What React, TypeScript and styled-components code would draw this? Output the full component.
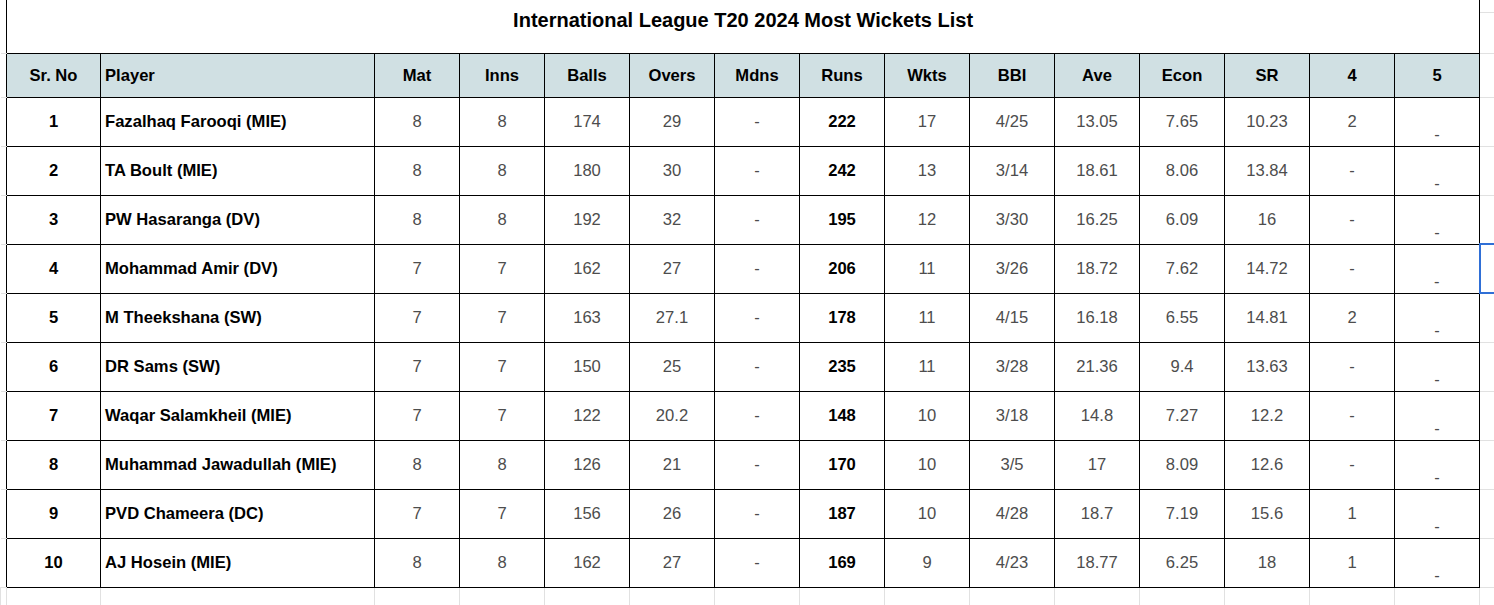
import React from "react";
import styled, { createGlobalStyle } from "styled-components";

type Row = (string | number)[];

const columns = [
  "Sr. No",
  "Player",
  "Mat",
  "Inns",
  "Balls",
  "Overs",
  "Mdns",
  "Runs",
  "Wkts",
  "BBI",
  "Ave",
  "Econ",
  "SR",
  "4",
  "5",
];

const rows: Row[] = [
  [1, "Fazalhaq Farooqi (MIE)", 8, 8, 174, 29, "-", 222, 17, "4/25", 13.05, 7.65, 10.23, 2, "-"],
  [2, "TA Boult (MIE)", 8, 8, 180, 30, "-", 242, 13, "3/14", 18.61, 8.06, 13.84, "-", "-"],
  [3, "PW Hasaranga (DV)", 8, 8, 192, 32, "-", 195, 12, "3/30", 16.25, 6.09, 16, "-", "-"],
  [4, "Mohammad Amir (DV)", 7, 7, 162, 27, "-", 206, 11, "3/26", 18.72, 7.62, 14.72, "-", "-"],
  [5, "M Theekshana (SW)", 7, 7, 163, 27.1, "-", 178, 11, "4/15", 16.18, 6.55, 14.81, 2, "-"],
  [6, "DR Sams (SW)", 7, 7, 150, 25, "-", 235, 11, "3/28", 21.36, 9.4, 13.63, "-", "-"],
  [7, "Waqar Salamkheil (MIE)", 7, 7, 122, 20.2, "-", 148, 10, "3/18", 14.8, 7.27, 12.2, "-", "-"],
  [8, "Muhammad Jawadullah (MIE)", 8, 8, 126, 21, "-", 170, 10, "3/5", 17, 8.09, 12.6, "-", "-"],
  [9, "PVD Chameera (DC)", 7, 7, 156, 26, "-", 187, 10, "4/28", 18.7, 7.19, 15.6, 1, "-"],
  [10, "AJ Hosein (MIE)", 8, 8, 162, 27, "-", 169, 9, "4/23", 18.77, 6.25, 18, 1, "-"],
];

// spreadsheet cell with the blue selection frame (row index)
const selectedRow = 3;

// gutter, Sr. No, Player, 13 stat columns, spill-over column
const widths = [6, 94, 274, ...Array(13).fill(85), 40];
const grid = "#e1e1e1";
const line = "#000";

const App: React.FC = () => {
  return (
    <>
      <GlobalStyle />
      <Sheet>
        <Table>
          <colgroup>
            {widths.map((w, i) => (
              <Col key={i} $width={w} />
            ))}
          </colgroup>
          <tbody>
            <TitleRow $height={12}>
              <Gutter rowSpan={2} />
              <TitleCell colSpan={15} rowSpan={2}>
                International League T20 2024 Most Wickets List
              </TitleCell>
              <Spill />
            </TitleRow>
            <TitleRow $height={41}>
              <Spill />
            </TitleRow>

            <HeadRow>
              <Gutter />
              {columns.map((c, i) => (
                <HeadCell key={c} $left={i === 1}>
                  {c}
                </HeadCell>
              ))}
              <Spill />
            </HeadRow>

            {rows.map((r, ri) => (
              <BodyRow key={ri}>
                <Gutter />
                {r.map((v, ci) => (
                  <Cell
                    key={ci}
                    $bold={ci === 0 || ci === 1 || ci === 7}
                    $left={ci === 1}
                    $low={ci === 14}
                  >
                    {v}
                  </Cell>
                ))}
                <Spill $selected={ri === selectedRow} />
              </BodyRow>
            ))}

            <FillerRow>
              {widths.map((_, i) => (
                <Filler key={i} />
              ))}
            </FillerRow>
          </tbody>
        </Table>
      </Sheet>
    </>
  );
};
export default App;

const GlobalStyle = createGlobalStyle`
  html, body {
    margin: 0;
    padding: 0;
    background: #fff;
    overflow: hidden;
  }
  body {
    font-family: "Liberation Sans", Arial, sans-serif;
  }
`;

const Sheet = styled.div`
  width: 1494px;
  height: 605px;
  overflow: hidden;
  background: #fff;
`;

const Table = styled.table`
  border-collapse: collapse;
  table-layout: fixed;
  width: ${widths.reduce((a, b) => a + b, 0)}px;
  font-size: 16.6px;
  color: #4d4d4d;
`;

const Col = styled.col<{ $width: number }>`
  width: ${(p) => p.$width}px;
`;

const TitleRow = styled.tr<{ $height: number }>`
  height: ${(p) => p.$height}px;
`;

const HeadRow = styled.tr`
  height: 44px;
`;

const BodyRow = styled.tr`
  height: 49px;
`;

const FillerRow = styled.tr`
  height: 30px;
`;

const Gutter = styled.td`
  padding: 0;
  border: none;
  border-bottom: 1px solid ${grid};
`;

const Spill = styled.td<{ $selected?: boolean }>`
  padding: 0;
  border: none;
  border-bottom: 1px solid ${grid};
  ${(p) => p.$selected && `border: 2px solid #2f6fd6;`}
`;

const TitleCell = styled.td`
  padding: 9px 0 0;
  vertical-align: top;
  text-align: center;
  font-size: 20px;
  font-weight: 700;
  color: #000;
  border-left: 1px solid ${line};
  border-right: 1px solid ${line};
  border-bottom: 1px solid ${line};
`;

const HeadCell = styled.th<{ $left?: boolean }>`
  padding: 2px 4px 0;
  background: #d0e0e3;
  border: 1px solid ${line};
  font-weight: 700;
  color: #000;
  text-align: ${(p) => (p.$left ? "left" : "center")};
  white-space: nowrap;
  overflow: hidden;
`;

const Cell = styled.td<{ $bold?: boolean; $left?: boolean; $low?: boolean }>`
  padding: ${(p) => (p.$low ? "0 4px 1px" : "1px 4px 0")};
  border: 1px solid ${line};
  text-align: ${(p) => (p.$left ? "left" : "center")};
  vertical-align: ${(p) => (p.$low ? "bottom" : "middle")};
  font-weight: ${(p) => (p.$bold ? 700 : 400)};
  color: ${(p) => (p.$bold ? "#000" : "#4d4d4d")};
  white-space: nowrap;
  overflow: hidden;
`;

const Filler = styled.td`
  padding: 0;
  border-left: 1px solid ${grid};
  border-right: 1px solid ${grid};
`;
